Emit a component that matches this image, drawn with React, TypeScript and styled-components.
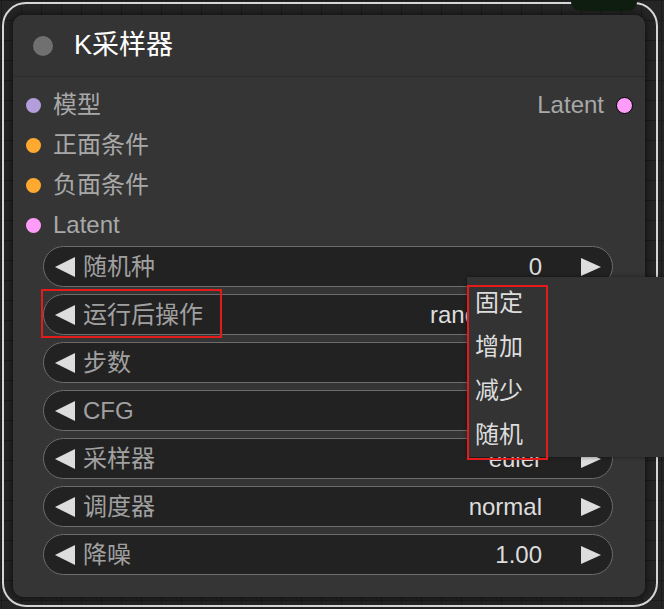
import React from "react";
import styled, { createGlobalStyle } from "styled-components";

const Global = createGlobalStyle`
  html, body { margin: 0; padding: 0; background: #222; }
  body { font-family: "Liberation Sans", "Noto Sans CJK SC", Arial, sans-serif; }
  * { box-sizing: border-box; }
`;

const Canvas = styled.div`
  position: relative;
  width: 664px;
  height: 609px;
  overflow: hidden;
  background-color: #252525;
  background-image: linear-gradient(#1b1b1b 1px, transparent 1px),
    linear-gradient(90deg, #1b1b1b 1px, transparent 1px);
  background-size: 20px 20px;
  background-position: 1px 0px;
  padding: 2px 0 0 2px;
`;

const Selection = styled.div`
  width: 656px;
  height: 605px;
  border: 2px solid #d6d6d6;
  border-radius: 24px;
  padding: 11px 11px 8px 9px;
  display: flex;
  flex-direction: column;
`;

const Node = styled.div`
  flex: 1;
  background: #353535;
  border-radius: 10px;
  box-shadow: 0 0 6px 2px rgba(0, 0, 0, 0.45);
  display: flex;
  flex-direction: column;
`;

const TitleBar = styled.div`
  height: 62px;
  border-bottom: 1px solid #2b2b2b;
  border-radius: 10px 10px 0 0;
  background: #343434;
  display: flex;
  align-items: center;
  gap: 21px;
  padding-left: 20px;
`;

const TitleDot = styled.span`
  width: 20px;
  height: 20px;
  border-radius: 50%;
  background: #707070;
`;

const Title = styled.span`
  font-size: 27px;
  color: #ffffff;
  line-height: 1;
`;

const Slots = styled.div`
  display: flex;
  flex-direction: column;
  padding-top: 8px;
`;

const SlotRow = styled.div`
  height: 40px;
  display: flex;
  align-items: center;
  justify-content: space-between;
  padding: 0 12px 0 13px;
`;

const Slot = styled.div`
  display: flex;
  align-items: center;
  gap: 12px;
  font-size: 24px;
  color: #a8a8a8;
  line-height: 1;
`;

const Dot = styled.span<{ $color: string; $out?: boolean }>`
  width: ${(p) => (p.$out ? 17 : 15)}px;
  height: ${(p) => (p.$out ? 17 : 15)}px;
  border-radius: 50%;
  background: ${(p) => p.$color};
  border: ${(p) => (p.$out ? "1.5px solid #000" : "none")};
`;

const Widgets = styled.div`
  display: flex;
  flex-direction: column;
  gap: 7px;
  padding: 1px 32px 0 30px;
`;

const Widget = styled.div`
  height: 41px;
  border: 1px solid #6c6c6c;
  border-radius: 21px;
  background: #222222;
  display: flex;
  align-items: center;
  padding: 0 11px;
  font-size: 24px;
  line-height: 1;
`;

const Label = styled.span`
  flex: 1;
  margin-left: 8px;
  color: #a0a0a0;
  white-space: nowrap;
`;

const Value = styled.span`
  margin-right: 39px;
  color: #dddddd;
  white-space: nowrap;
`;

const Arrow = styled.svg`
  width: 20px;
  height: 20px;
  flex: none;
  display: block;
`;

const Menu = styled.div`
  position: absolute;
  left: 467px;
  top: 277px;
  width: 230px;
  height: 180px;
  background: #333333;
  box-shadow: 0 0 4px rgba(0, 0, 0, 0.45);
  padding: 4px 0 0 8px;
  display: flex;
  flex-direction: column;
`;

const MenuItem = styled.div`
  height: 44px;
  display: flex;
  align-items: center;
  font-size: 24px;
  color: #dddddd;
  line-height: 1;
`;

const Mark = styled.div`
  position: absolute;
  border: 2px solid #e31b1b;
`;

const OtherNode = styled.div`
  position: absolute;
  left: 571px;
  top: -10px;
  width: 66px;
  height: 21px;
  border-radius: 9px;
  background: #0e1d10;
`;

const LeftArrow = () => (
  <Arrow viewBox="0 0 20 20">
    <polygon points="0,10 20,0 20,20" fill="#dddddd" />
  </Arrow>
);

const RightArrow = () => (
  <Arrow viewBox="0 0 20 20">
    <polygon points="0,1 20,10 0,19" fill="#dddddd" />
  </Arrow>
);

const widgets = [
  { label: "随机种", value: "0" },
  { label: "运行后操作", value: "randomize" },
  { label: "步数", value: "" },
  { label: "CFG", value: "" },
  { label: "采样器", value: "euler" },
  { label: "调度器", value: "normal" },
  { label: "降噪", value: "1.00" },
];

const inputs = [
  { name: "模型", color: "#b39ddb" },
  { name: "正面条件", color: "#ffa931" },
  { name: "负面条件", color: "#ffa931" },
  { name: "Latent", color: "#ff9cf9" },
];

export default function App() {
  return (
    <>
      <Global />
      <Canvas>
        <Selection>
          <Node>
            <TitleBar>
              <TitleDot />
              <Title>K采样器</Title>
            </TitleBar>
            <Slots>
              {inputs.map((inp, i) => (
                <SlotRow key={inp.name}>
                  <Slot>
                    <Dot $color={inp.color} />
                    {inp.name}
                  </Slot>
                  {i === 0 && (
                    <Slot>
                      Latent
                      <Dot $color="#ff9cf9" $out />
                    </Slot>
                  )}
                </SlotRow>
              ))}
            </Slots>
            <Widgets>
              {widgets.map((w) => (
                <Widget key={w.label}>
                  <LeftArrow />
                  <Label>{w.label}</Label>
                  <Value>{w.value}</Value>
                  <RightArrow />
                </Widget>
              ))}
            </Widgets>
          </Node>
        </Selection>
        <OtherNode />
        <Menu>
          <MenuItem>固定</MenuItem>
          <MenuItem>增加</MenuItem>
          <MenuItem>减少</MenuItem>
          <MenuItem>随机</MenuItem>
        </Menu>
        <Mark style={{ left: 41, top: 289, width: 181, height: 49 }} />
        <Mark style={{ left: 467, top: 285, width: 81, height: 175 }} />
      </Canvas>
    </>
  );
}
